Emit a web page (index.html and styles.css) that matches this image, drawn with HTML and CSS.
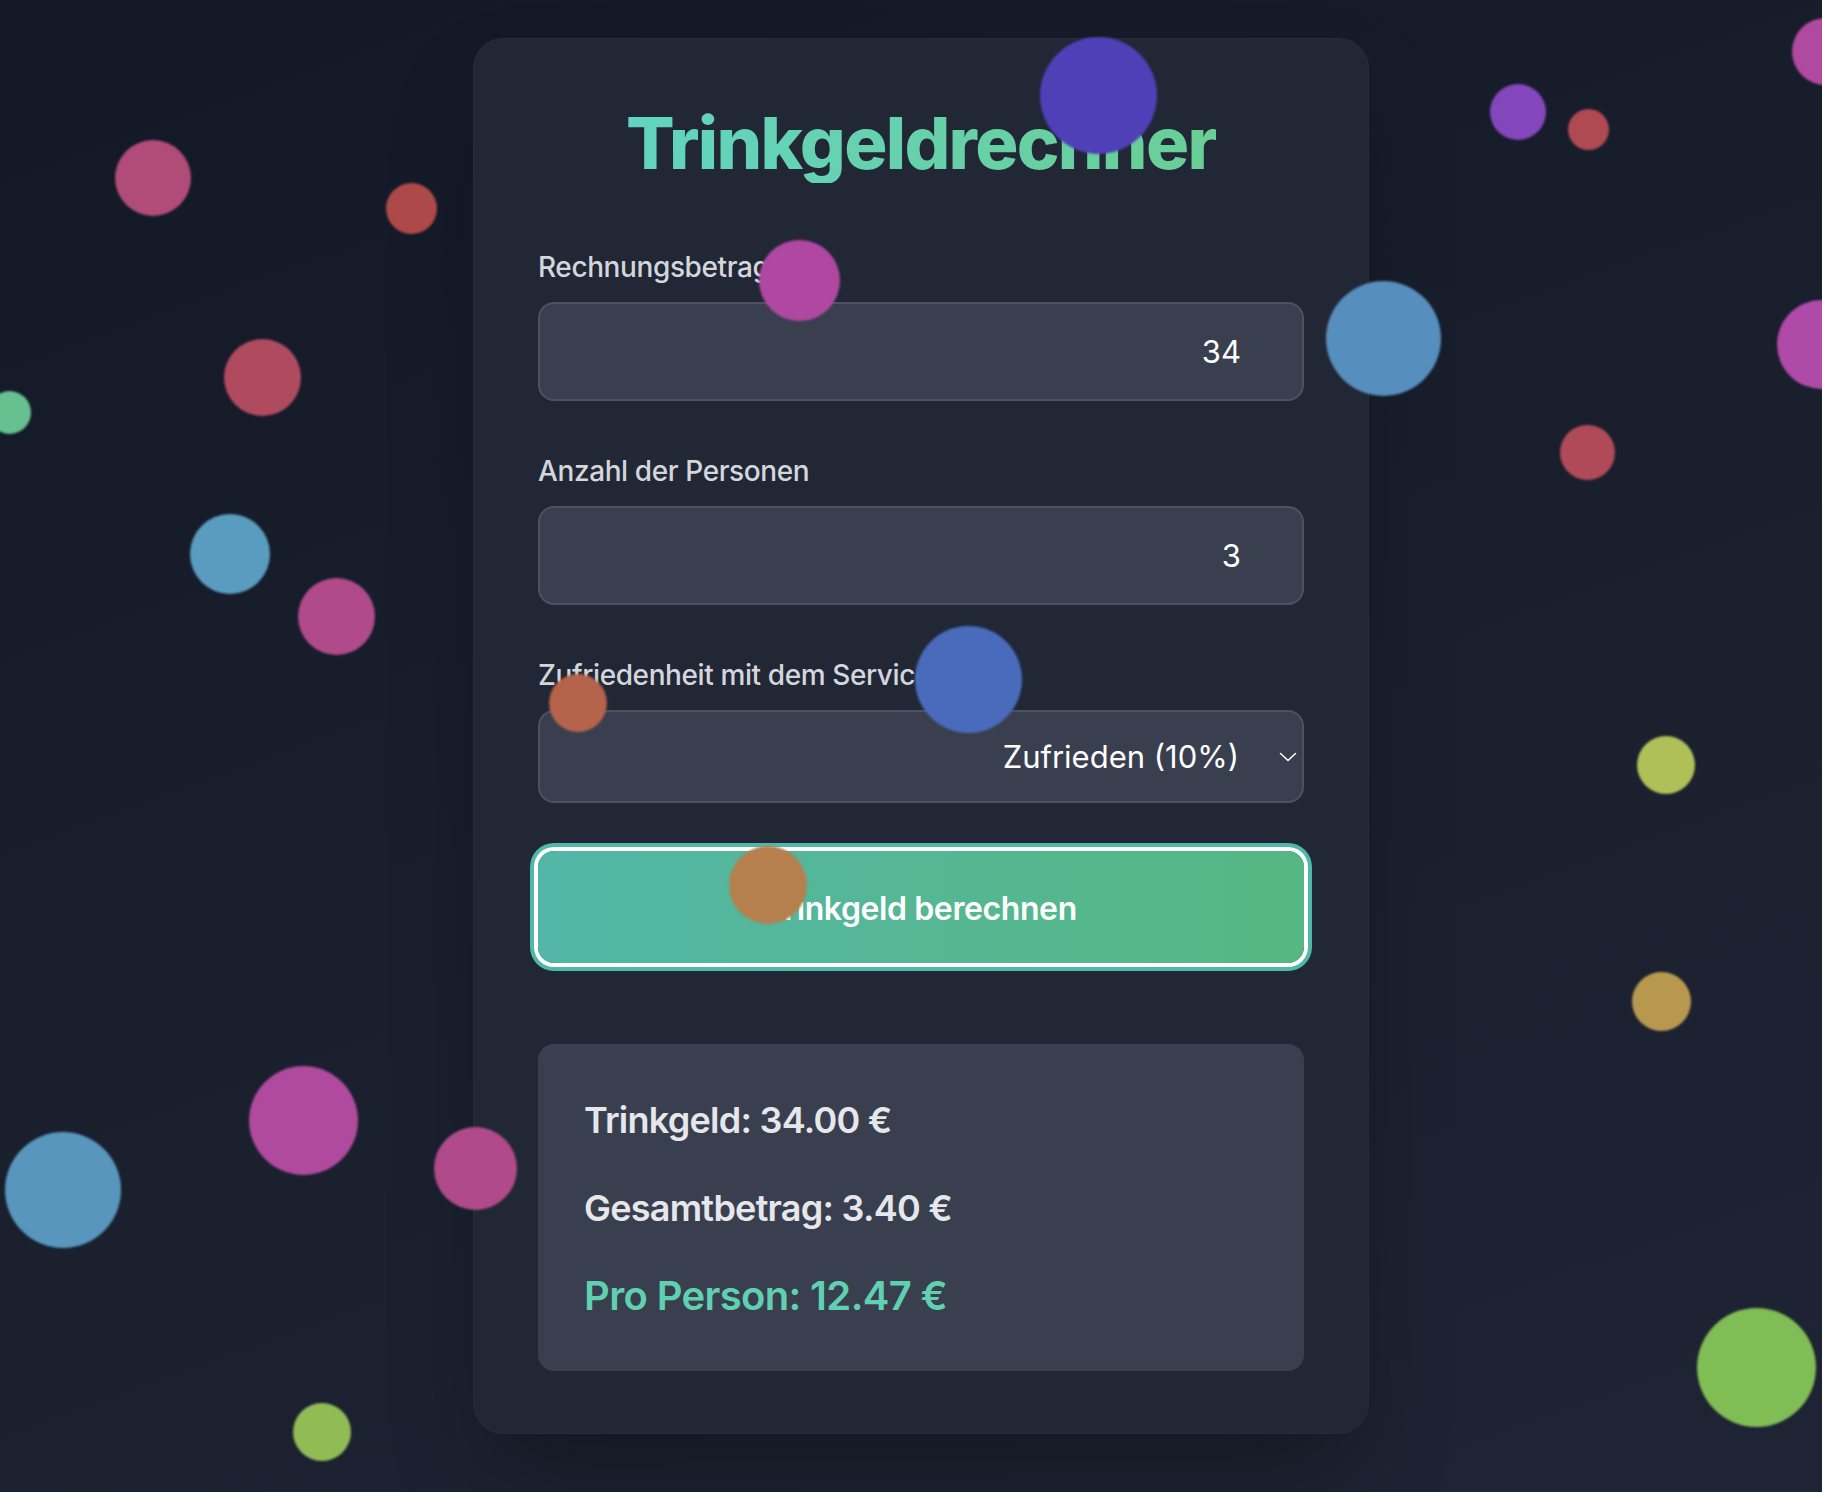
FILE: index.html
```html
<!DOCTYPE html>
<html lang="de">
<head>
<meta charset="utf-8">
<title>Trinkgeldrechner</title>
<link rel="stylesheet" href="styles.css">
</head>
<body>
<main class="page">
  <section class="card">
    <h1 class="title">Trinkgeldrechner</h1>

    <div class="field">
      <label class="label" for="bill">Rechnungsbetrag</label>
      <input class="control" id="bill" type="text" value="34">
    </div>

    <div class="field">
      <label class="label" for="people">Anzahl der Personen</label>
      <input class="control" id="people" type="text" value="3">
    </div>

    <div class="field">
      <label class="label" for="service">Zufriedenheit mit dem Service</label>
      <div class="select-wrap">
        <select class="control select" id="service">
          <option>Zufrieden (10%)</option>
        </select>
        <svg class="chevron" viewBox="0 0 18 10" width="18" height="10" aria-hidden="true"><path d="M1.5 1.5 L9 8.5 L16.5 1.5" fill="none" stroke="#ffffff" stroke-width="1.6" stroke-linecap="round" stroke-linejoin="round"/></svg>
      </div>
    </div>

    <button class="calc" type="button">Trinkgeld berechnen</button>

    <div class="result">
      <p class="line">Trinkgeld: 34.00 €</p>
      <p class="line">Gesamtbetrag: 3.40 €</p>
      <p class="line accent">Pro Person: 12.47 €</p>
    </div>
  </section>
</main>

<div class="bubbles" aria-hidden="true">
  <span class="bubble" style="left:115px;top:140px;width:76px;height:76px;background:#b14b78"></span>
  <span class="bubble" style="left:386px;top:183px;width:51px;height:51px;background:#ae4949"></span>
  <span class="bubble" style="left:224px;top:339px;width:77px;height:77px;background:#b04a5f"></span>
  <span class="bubble" style="left:-12px;top:391px;width:43px;height:43px;background:#66c08f"></span>
  <span class="bubble" style="left:190px;top:514px;width:80px;height:80px;background:#5a9cbf"></span>
  <span class="bubble" style="left:298px;top:578px;width:77px;height:77px;background:#b04a8a"></span>
  <span class="bubble" style="left:1040px;top:37px;width:117px;height:117px;background:#4f40b7"></span>
  <span class="bubble" style="left:759px;top:240px;width:81px;height:81px;background:#b048a2"></span>
  <span class="bubble" style="left:1326px;top:281px;width:115px;height:115px;background:#568ebd"></span>
  <span class="bubble" style="left:1490px;top:84px;width:56px;height:56px;background:#8447bb"></span>
  <span class="bubble" style="left:1568px;top:109px;width:41px;height:41px;background:#b04a52"></span>
  <span class="bubble" style="left:1792px;top:18px;width:67px;height:67px;background:#b04aa0"></span>
  <span class="bubble" style="left:1777px;top:300px;width:89px;height:89px;background:#b04aa8"></span>
  <span class="bubble" style="left:1560px;top:425px;width:55px;height:55px;background:#b04a58"></span>
  <span class="bubble" style="left:549px;top:674px;width:58px;height:58px;background:#b5634a"></span>
  <span class="bubble" style="left:915px;top:626px;width:107px;height:107px;background:#4a6bbb"></span>
  <span class="bubble" style="left:1637px;top:736px;width:58px;height:58px;background:#b0c058"></span>
  <span class="bubble" style="left:729px;top:846px;width:78px;height:78px;background:#b5804d"></span>
  <span class="bubble" style="left:1632px;top:972px;width:59px;height:59px;background:#b8984f"></span>
  <span class="bubble" style="left:249px;top:1066px;width:109px;height:109px;background:#b04a9e"></span>
  <span class="bubble" style="left:5px;top:1132px;width:116px;height:116px;background:#5896bd"></span>
  <span class="bubble" style="left:434px;top:1127px;width:83px;height:83px;background:#b04a8a"></span>
  <span class="bubble" style="left:293px;top:1403px;width:58px;height:58px;background:#90bb55"></span>
  <span class="bubble" style="left:1697px;top:1308px;width:119px;height:119px;background:#80bd55"></span>
</div>
</body>
</html>
```

FILE: styles.css
```css
* { box-sizing: border-box; }

html, body {
  margin: 0;
  padding: 0;
}

body {
  min-height: 1492px;
  background: linear-gradient(160deg, #131827 0%, #191f2d 50%, #1e2433 100%);
  font-family: "Inter", "Noto Sans", sans-serif;
  color: #e5e7eb;
  overflow: hidden;
}

.page {
  display: flex;
  justify-content: center;
  padding: 38px 0 0 20px;
}

.card {
  width: 896px;
  background: #212735;
  border: 1px solid #262c3a;
  border-radius: 30px;
  padding: 64px 64px 62px;
  box-shadow: 0 50px 100px -24px rgba(0, 0, 0, 0.35);
}

.title {
  margin: 0 auto 64px;
  width: fit-content;
  font-size: 72px;
  line-height: 80px;
  font-weight: 800;
  letter-spacing: -1.7px;
  background: linear-gradient(90deg, #62d4c0 0%, #67d0a6 60%, #69cf96 100%);
  -webkit-background-clip: text;
  background-clip: text;
  color: transparent;
}

.field {
  display: flex;
  flex-direction: column;
  margin-bottom: 50px;
}

.label {
  font-size: 28px;
  line-height: 40px;
  font-weight: 500;
  color: #d3d6dc;
  margin-bottom: 15px;
  letter-spacing: -0.4px;
}

.control {
  width: 100%;
  height: 99px;
  background: #393f4f;
  border: 2px solid #4b5262;
  border-radius: 16px;
  color: #ffffff;
  font-family: "Inter", "Noto Sans", sans-serif;
  font-size: 31px;
  text-align: right;
  padding: 0 61px 0 32px;
  outline: none;
}

.select-wrap {
  position: relative;
}

.select {
  height: 93px;
  -webkit-appearance: none;
  appearance: none;
  text-align-last: right;
  padding-right: 63px;
}

.chevron {
  position: absolute;
  right: 7px;
  top: 42px;
}

.calc {
  display: block;
  width: 100%;
  height: 112px;
  margin: -2px 0 81px;
  border: none;
  border-radius: 16px;
  background: linear-gradient(90deg, #53b6a7 0%, #55b792 55%, #56b783 100%);
  box-shadow: 0 0 0 4px #ffffff, 0 0 0 8px #50b8a7;
  color: #ffffff;
  font-family: "Inter", "Noto Sans", sans-serif;
  font-size: 32px;
  font-weight: 600;
  letter-spacing: -0.4px;
  padding-top: 3px;
}

.result {
  background: #393f4f;
  border-radius: 16px;
  padding: 48px 48px 47px 46px;
}

.line {
  margin: 0 0 32px;
  font-size: 36px;
  line-height: 56px;
  font-weight: 600;
  color: #e6e7eb;
  letter-spacing: -0.75px;
}

.line.accent {
  margin: 0;
  font-size: 40px;
  color: #5fd0b0;
  letter-spacing: -0.65px;
}

.bubbles {
  position: fixed;
  inset: 0;
  pointer-events: none;
  z-index: 10;
}

.bubble {
  position: absolute;
  border-radius: 50%;
  filter: blur(0.8px);
}
```
